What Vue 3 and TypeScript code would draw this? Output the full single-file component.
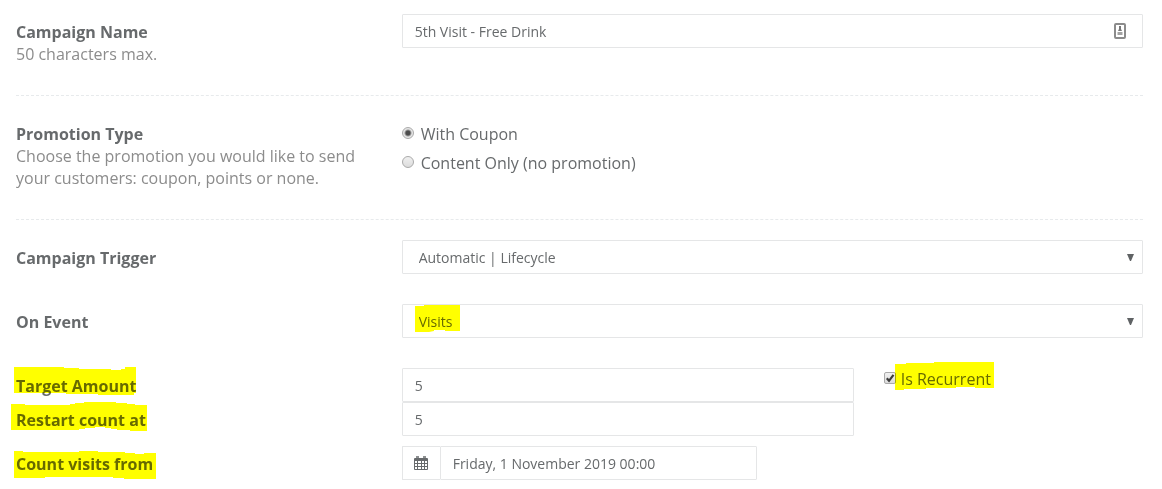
<script setup lang="ts">
import { ref } from 'vue'

const name = ref('5th Visit - Free Drink')
const promotion = ref<'coupon' | 'content'>('coupon')
const trigger = ref('Automatic | Lifecycle')
const event = ref('Visits')
const target = ref('5')
const restart = ref('5')
const from = ref('Friday, 1 November 2019 00:00')
const recurrent = ref(true)
</script>

<template>
  <form class="form" @submit.prevent>
    <div class="row">
      <div class="caption">
        <label class="title" for="name">Campaign Name</label>
        <p class="hint">50 characters max.</p>
      </div>
      <div class="field wide">
        <input id="name" v-model="name" class="control" type="text" maxlength="50" />
        <svg class="autofill" viewBox="0 0 12 16" aria-hidden="true">
          <rect x="1" y="1" width="10" height="14" rx="1" fill="#fff" stroke="#8b8b8b" stroke-width="2" />
          <path d="M5 3h2v3l1 2H4l1-2z" fill="#777" />
          <path d="M3.500 9h5v3h-5z" fill="#a2a2a2" />
        </svg>
      </div>
    </div>

    <hr class="divider" />

    <div class="row">
      <div class="caption">
        <span id="promotion-title" class="title">Promotion Type</span>
        <p class="hint">Choose the promotion you would like to send your customers: coupon, points or none.</p>
      </div>
      <div class="options" role="radiogroup" aria-labelledby="promotion-title">
        <label class="option">
          <input v-model="promotion" class="radio" type="radio" name="promotion" value="coupon" />
          With Coupon
        </label>
        <label class="option">
          <input v-model="promotion" class="radio" type="radio" name="promotion" value="content" />
          Content Only (no promotion)
        </label>
      </div>
    </div>

    <hr class="divider" />

    <div class="row">
      <div class="caption"><label class="title" for="trigger">Campaign Trigger</label></div>
      <div class="field wide">
        <select id="trigger" v-model="trigger" class="control select">
          <option>Automatic | Lifecycle</option>
        </select>
        <svg class="arrow" viewBox="0 0 7 7" aria-hidden="true"><path d="M0 0h7L4 7H3z" /></svg>
      </div>
    </div>

    <div class="row spaced">
      <div class="caption"><label class="title" for="event">On Event</label></div>
      <div class="field wide">
        <select id="event" v-model="event" class="control select">
          <option>Visits</option>
        </select>
        <svg class="arrow" viewBox="0 0 7 7" aria-hidden="true"><path d="M0 0h7L4 7H3z" /></svg>
        <svg class="marker" aria-hidden="true">
          <path d="M13 2H22V1H58V27H43V26H32V27L27 28H13z" />
        </svg>
      </div>
    </div>

    <div class="row spaced">
      <div class="caption">
        <label class="title" for="target">
          Target Amount
          <svg class="marker" aria-hidden="true">
            <path d="M-2-8H48V-7H63V-6H95V-5H105V-6H109V-8H120V18H118V20H82V19H50V18H-2z" />
          </svg>
        </label>
      </div>
      <div class="field medium"><input id="target" v-model="target" class="control" type="text" inputmode="numeric" /></div>
      <label class="check">
        <span class="box">
          <input v-model="recurrent" class="checkbox" type="checkbox" />
          <svg v-if="recurrent" class="tick" viewBox="0 0 12 12" aria-hidden="true">
            <path d="M2.800 6.300L5 8.800L9.500 2.800" fill="none" stroke="#3c3c3c" stroke-width="2.200" />
          </svg>
        </span>
        <span class="marked">
          Is Recurrent
          <svg class="marker" aria-hidden="true">
            <path d="M-6-4H5V-5H33V-6H93V20H74V19H55V20H25V21H3V22H-6z" />
          </svg>
        </span>
      </label>
    </div>

    <div class="row">
      <div class="caption">
        <label class="title" for="restart">
          Restart count at
          <svg class="marker" aria-hidden="true">
            <path d="M-5-5H9V-4H54V-5H59V-6H68V-7H100V-6H111V-5H119V-4H131V22H114V21H101V20H95V19H89V18H79V19H69V20H63V21H-5z" />
          </svg>
        </label>
      </div>
      <div class="field medium"><input id="restart" v-model="restart" class="control" type="text" inputmode="numeric" /></div>
    </div>

    <div class="row near">
      <div class="caption">
        <label class="title" for="from">
          Count visits from
          <svg class="marker" aria-hidden="true">
            <path d="M-2-2H7V-1H63V-2H82V-1H109V0H119V1H128V0H140V26H108V25H97V24H29V25H-2z" />
          </svg>
        </label>
      </div>
      <div class="field narrow group">
        <span class="addon">
          <svg class="calendar" viewBox="0 0 14 14" aria-hidden="true">
            <path class="rings" d="M2 0h3v4H2zM9 0h3v4H9z" />
            <path d="M0 3q0-1 1-1h12q1 0 1 1v10q0 1-1 1H1q-1 0-1-1zM1 5v2h2V5zM4 5v2h3V5zM8 5v2h2V5zM11 5v2h2V5zM1 8v2h2V8zM4 8v2h3V8zM8 8v2h2V8zM11 8v2h2V8zM1 11v2h2v-2zM4 11v2h3v-2zM8 11v2h2v-2zM11 11v2h2v-2z" />
          </svg>
        </span>
        <input id="from" v-model="from" class="control" type="text" />
      </div>
    </div>
  </form>
</template>

<style>
body {
  background: #fff;
}
</style>

<style scoped>
.form {
  padding: 14px 19px 9px 16px;
  font-family: "Open Sans", "Noto Sans", sans-serif;
  font-size: 16px;
  line-height: 22px;
  color: #676a6c;
}
.row {
  display: grid;
  grid-template-columns: repeat(12, minmax(0, 1fr));
  column-gap: 30px;
  align-items: start;
}
.spaced {
  margin-top: 30px;
}
.near {
  margin-top: 10px;
}
.caption {
  grid-column: span 4;
  padding-top: 7px;
}
.title {
  position: relative;
  display: block;
  font-weight: 700;
}
.hint {
  margin: 0;
  color: #8c8c8c;
}
.divider {
  margin: 30px 0 20px;
  border: 0;
  border-top: 1px dashed #e7eaec;
}
.field {
  position: relative;
}
.wide,
.options {
  grid-column: span 8;
}
.medium {
  grid-column: span 5;
}
.narrow {
  grid-column: span 4;
}
.control {
  display: block;
  box-sizing: border-box;
  width: 100%;
  height: 34px;
  margin: 0;
  padding: 0 12px;
  border: 1px solid #e5e6e7;
  border-radius: 1px;
  background: #fff;
  color: inherit;
  font-family: inherit;
  font-size: 14px;
  appearance: none;
}
.select {
  padding: 0 16px;
}
.arrow {
  position: absolute;
  top: 14px;
  right: 9px;
  width: 7px;
  height: 7px;
  fill: #5f6264;
  pointer-events: none;
}
.autofill {
  position: absolute;
  top: 9px;
  right: 17px;
  width: 12px;
  height: 16px;
}
.marker {
  position: absolute;
  top: 0;
  left: 0;
  width: 1px;
  height: 1px;
  overflow: visible;
  fill: #ff0;
  mix-blend-mode: multiply;
  pointer-events: none;
}
.options {
  display: grid;
  justify-items: start;
  gap: 7px;
  padding-top: 7px;
}
.option,
.check {
  display: flex;
  align-items: flex-start;
  gap: 7px;
}
.check {
  grid-column: span 3;
  gap: 5px;
}
.radio,
.checkbox {
  display: block;
  box-sizing: border-box;
  flex: none;
  width: 12px;
  height: 12px;
  margin: 4px 0 0;
  border: 1px solid #aaa;
  background: linear-gradient(#f0f0f0, #dcdcdc);
  appearance: none;
}
.radio {
  border-radius: 50%;
}
.radio:checked {
  background: radial-gradient(circle, #4c4c4c 0 2px, #e6e6e6 4px);
}
.checkbox {
  border-radius: 2px;
}
.box,
.marked {
  position: relative;
}
.tick {
  position: absolute;
  top: 4px;
  left: 0;
  width: 12px;
  height: 12px;
  pointer-events: none;
}
.group {
  display: flex;
}
.addon {
  display: flex;
  flex: none;
  align-items: center;
  justify-content: center;
  width: 37px;
  border: 1px solid #e5e6e7;
  border-right: 0;
  border-radius: 1px 0 0 1px;
}
.calendar {
  width: 14px;
  height: 14px;
  fill: #676a6c;
  fill-rule: evenodd;
}
.rings {
  fill: #8d9091;
}
</style>
